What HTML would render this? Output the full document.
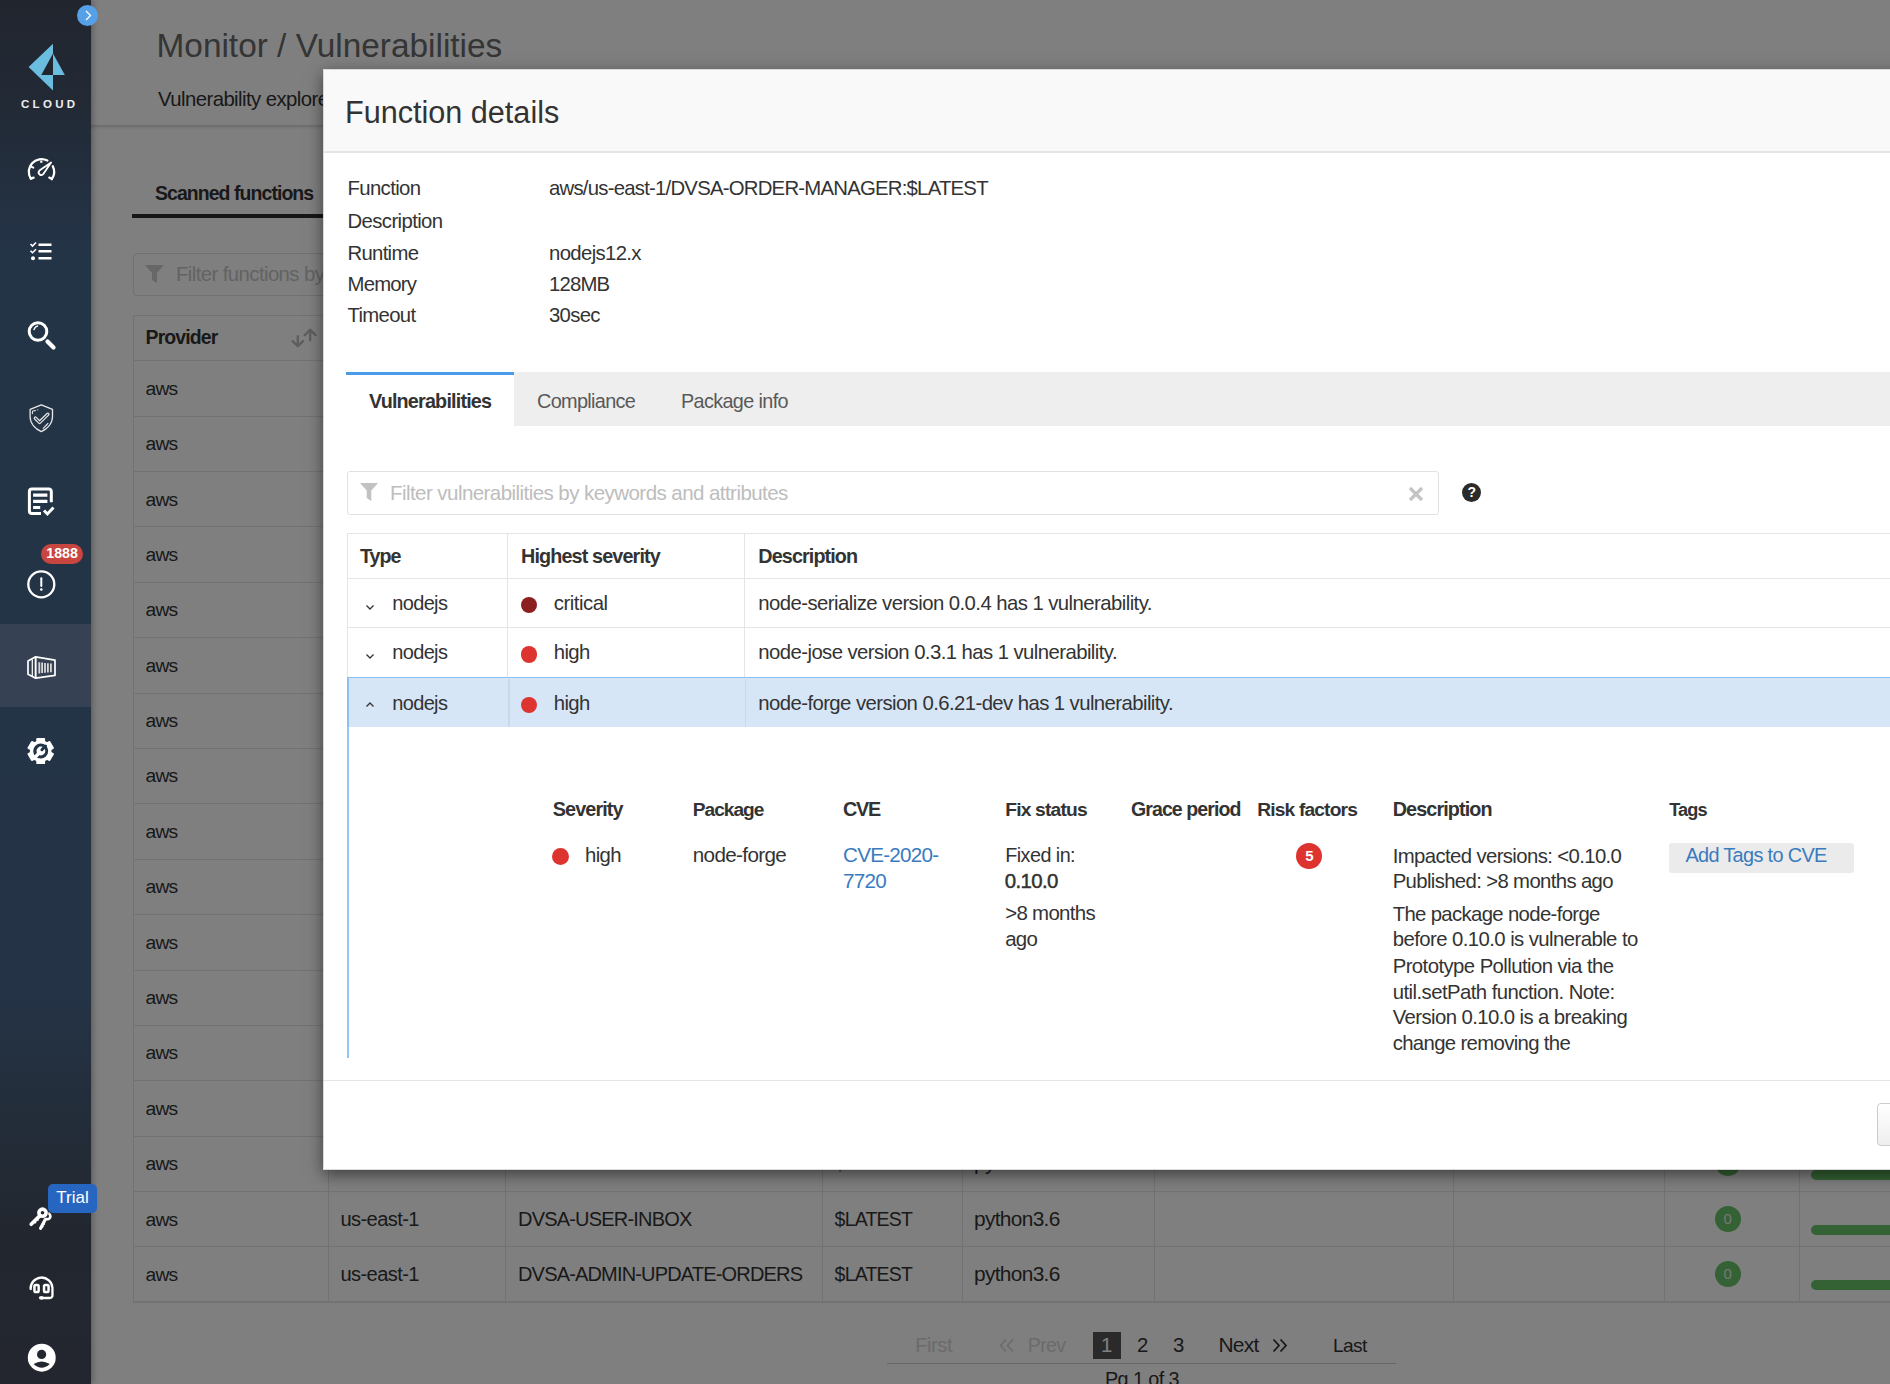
<!DOCTYPE html>
<html><head><meta charset="utf-8">
<style>
*{margin:0;padding:0;box-sizing:border-box}
html,body{width:1890px;height:1384px;overflow:hidden;background:#fff;font-family:"Liberation Sans",sans-serif;color:#333}
.t{position:absolute;white-space:nowrap;line-height:1}
.abs{position:absolute}
#page{position:absolute;left:91px;top:0;width:1799px;height:1384px;background:#fff}
#backdrop{position:absolute;left:0;top:0;width:1890px;height:1384px;background:rgba(0,0,0,.5)}
#side{position:absolute;left:0;top:0;width:91px;height:1384px;box-shadow:1px 0 7px rgba(0,0,0,.35);
 background:linear-gradient(180deg,#21252e 0px,#222a36 110px,#243447 250px,#243447 700px,#243345 1000px,#22272f 1230px,#23262e 1384px)}
#modal{position:absolute;left:323px;top:69px;width:1640px;height:1100.5px;background:#fff;
 box-shadow:0 5px 15px rgba(0,0,0,.5);border:1px solid #d9d9d9;border-right:none;overflow:hidden}
</style></head><body>
<div id="page"></div><div class="t" style="left:156.5px;top:27px;line-height:37px;font-size:33.40px;letter-spacing:0.000px;color:#6a6a6a;">Monitor / Vulnerabilities</div>
<div class="t" style="left:158.0px;top:88px;line-height:22px;font-size:20.33px;letter-spacing:-0.562px;">Vulnerability explorer</div>
<div class="abs" style="left:91px;top:124.5px;width:1799px;height:2px;background:#e0e0e0;box-shadow:0 1px 3px rgba(0,0,0,.12)"></div><div class="t" style="left:155.0px;top:182px;line-height:22px;font-size:19.47px;letter-spacing:-0.931px;font-weight:bold;color:#333;">Scanned functions</div>
<div class="abs" style="left:132px;top:214px;width:260px;height:4px;background:#2c2c2c"></div><div class="abs" style="left:133px;top:253px;width:600px;height:43px;border:1px solid #e0e0e0;border-radius:4px"></div><svg class="abs" style="left:145px;top:265px" width="19" height="18" viewBox="0 0 19 18"><path d="M0 0h19l-7 8v10l-5-3V8z" fill="#cfcfcf"/></svg><div class="t" style="left:176.0px;top:263px;line-height:22px;font-size:20.33px;letter-spacing:-0.578px;color:#c6c6c6;">Filter functions by keywords and attributes</div>
<div class="abs" style="left:133px;top:314.6px;width:1800px;height:987.2px;border:1px solid #e5e5e5"></div><div class="abs" style="left:328px;top:314.6px;width:1px;height:987.2px;background:#e5e5e5"></div><div class="abs" style="left:505px;top:314.6px;width:1px;height:987.2px;background:#e5e5e5"></div><div class="abs" style="left:822px;top:314.6px;width:1px;height:987.2px;background:#e5e5e5"></div><div class="abs" style="left:961.5px;top:314.6px;width:1px;height:987.2px;background:#e5e5e5"></div><div class="abs" style="left:1154px;top:314.6px;width:1px;height:987.2px;background:#e5e5e5"></div><div class="abs" style="left:1452.5px;top:314.6px;width:1px;height:987.2px;background:#e5e5e5"></div><div class="abs" style="left:1664px;top:314.6px;width:1px;height:987.2px;background:#e5e5e5"></div><div class="abs" style="left:1798.5px;top:314.6px;width:1px;height:987.2px;background:#e5e5e5"></div><div class="abs" style="left:133px;top:360.3px;width:1800px;height:1px;background:#e5e5e5"></div><div class="abs" style="left:133px;top:415.7px;width:1800px;height:1px;background:#e5e5e5"></div><div class="abs" style="left:133px;top:471.1px;width:1800px;height:1px;background:#e5e5e5"></div><div class="abs" style="left:133px;top:526.4px;width:1800px;height:1px;background:#e5e5e5"></div><div class="abs" style="left:133px;top:581.8px;width:1800px;height:1px;background:#e5e5e5"></div><div class="abs" style="left:133px;top:637.2px;width:1800px;height:1px;background:#e5e5e5"></div><div class="abs" style="left:133px;top:692.6px;width:1800px;height:1px;background:#e5e5e5"></div><div class="abs" style="left:133px;top:748.0px;width:1800px;height:1px;background:#e5e5e5"></div><div class="abs" style="left:133px;top:803.3px;width:1800px;height:1px;background:#e5e5e5"></div><div class="abs" style="left:133px;top:858.7px;width:1800px;height:1px;background:#e5e5e5"></div><div class="abs" style="left:133px;top:914.1px;width:1800px;height:1px;background:#e5e5e5"></div><div class="abs" style="left:133px;top:969.5px;width:1800px;height:1px;background:#e5e5e5"></div><div class="abs" style="left:133px;top:1024.9px;width:1800px;height:1px;background:#e5e5e5"></div><div class="abs" style="left:133px;top:1080.2px;width:1800px;height:1px;background:#e5e5e5"></div><div class="abs" style="left:133px;top:1135.6px;width:1800px;height:1px;background:#e5e5e5"></div><div class="abs" style="left:133px;top:1191.0px;width:1800px;height:1px;background:#e5e5e5"></div><div class="abs" style="left:133px;top:1246.4px;width:1800px;height:1px;background:#e5e5e5"></div><div class="abs" style="left:133px;top:1301.8px;width:1800px;height:1px;background:#e5e5e5"></div><div class="t" style="left:145.6px;top:326px;line-height:22px;font-size:19.47px;letter-spacing:-0.898px;font-weight:bold;color:#333;">Provider</div>
<svg class="abs" style="left:290px;top:327px" width="28" height="22" viewBox="290 327 28 22"><path d="M297.8 336.2v9.6M292.6 341.2l5.2 5 5.2-5M310.2 340.3V330.2M304.8 335.1l5.4-5.3 5.4 5.3" stroke="#bcbcbc" stroke-width="2.4" fill="none" stroke-linecap="round" stroke-linejoin="round"/></svg><div class="t" style="left:145.5px;top:378px;line-height:21px;font-size:19.26px;letter-spacing:-0.747px;">aws</div>
<div class="t" style="left:145.5px;top:433px;line-height:21px;font-size:19.26px;letter-spacing:-0.747px;">aws</div>
<div class="t" style="left:145.5px;top:489px;line-height:21px;font-size:19.26px;letter-spacing:-0.747px;">aws</div>
<div class="t" style="left:145.5px;top:544px;line-height:21px;font-size:19.26px;letter-spacing:-0.747px;">aws</div>
<div class="t" style="left:145.5px;top:599px;line-height:21px;font-size:19.26px;letter-spacing:-0.747px;">aws</div>
<div class="t" style="left:145.5px;top:655px;line-height:21px;font-size:19.26px;letter-spacing:-0.747px;">aws</div>
<div class="t" style="left:145.5px;top:710px;line-height:21px;font-size:19.26px;letter-spacing:-0.747px;">aws</div>
<div class="t" style="left:145.5px;top:765px;line-height:21px;font-size:19.26px;letter-spacing:-0.747px;">aws</div>
<div class="t" style="left:145.5px;top:821px;line-height:21px;font-size:19.26px;letter-spacing:-0.747px;">aws</div>
<div class="t" style="left:145.5px;top:876px;line-height:21px;font-size:19.26px;letter-spacing:-0.747px;">aws</div>
<div class="t" style="left:145.5px;top:932px;line-height:21px;font-size:19.26px;letter-spacing:-0.747px;">aws</div>
<div class="t" style="left:145.5px;top:987px;line-height:21px;font-size:19.26px;letter-spacing:-0.747px;">aws</div>
<div class="t" style="left:145.5px;top:1042px;line-height:21px;font-size:19.26px;letter-spacing:-0.747px;">aws</div>
<div class="t" style="left:145.5px;top:1098px;line-height:21px;font-size:19.26px;letter-spacing:-0.747px;">aws</div>
<div class="t" style="left:145.5px;top:1153px;line-height:21px;font-size:19.26px;letter-spacing:-0.747px;">aws</div>
<div class="t" style="left:340.5px;top:1152px;line-height:22px;font-size:20.12px;letter-spacing:-0.609px;">us-east-1</div>
<div class="t" style="left:518.0px;top:1152px;line-height:22px;font-size:20.01px;letter-spacing:-0.790px;">DVSA-ADMIN-GET-RECEIPT</div>
<div class="t" style="left:834.6px;top:1152px;line-height:22px;font-size:19.47px;letter-spacing:-0.775px;">$LATEST</div>
<div class="t" style="left:974.0px;top:1151px;line-height:23px;font-size:20.87px;letter-spacing:-0.666px;">python3.6</div>
<div class="abs" style="left:1714.6px;top:1150.4px;width:26px;height:26px;border-radius:50%;background:#68c468;color:#eee;font-size:15px;line-height:26px;text-align:center">0</div><div class="abs" style="left:1810.5px;top:1169.6px;width:120px;height:10px;border-radius:5px;background:#68c468"></div><div class="t" style="left:145.5px;top:1209px;line-height:21px;font-size:19.26px;letter-spacing:-0.747px;">aws</div>
<div class="t" style="left:340.5px;top:1208px;line-height:22px;font-size:20.12px;letter-spacing:-0.609px;">us-east-1</div>
<div class="t" style="left:518.0px;top:1208px;line-height:22px;font-size:20.01px;letter-spacing:-0.810px;">DVSA-USER-INBOX</div>
<div class="t" style="left:834.6px;top:1208px;line-height:22px;font-size:19.47px;letter-spacing:-0.775px;">$LATEST</div>
<div class="t" style="left:974.0px;top:1207px;line-height:23px;font-size:20.87px;letter-spacing:-0.666px;">python3.6</div>
<div class="abs" style="left:1714.6px;top:1205.8px;width:26px;height:26px;border-radius:50%;background:#68c468;color:#eee;font-size:15px;line-height:26px;text-align:center">0</div><div class="abs" style="left:1810.5px;top:1225.0px;width:120px;height:10px;border-radius:5px;background:#68c468"></div><div class="t" style="left:145.5px;top:1264px;line-height:21px;font-size:19.26px;letter-spacing:-0.747px;">aws</div>
<div class="t" style="left:340.5px;top:1263px;line-height:22px;font-size:20.12px;letter-spacing:-0.609px;">us-east-1</div>
<div class="t" style="left:518.0px;top:1263px;line-height:22px;font-size:20.01px;letter-spacing:-0.829px;">DVSA-ADMIN-UPDATE-ORDERS</div>
<div class="t" style="left:834.6px;top:1263px;line-height:22px;font-size:19.47px;letter-spacing:-0.775px;">$LATEST</div>
<div class="t" style="left:974.0px;top:1262px;line-height:23px;font-size:20.87px;letter-spacing:-0.666px;">python3.6</div>
<div class="abs" style="left:1714.6px;top:1261.2px;width:26px;height:26px;border-radius:50%;background:#68c468;color:#eee;font-size:15px;line-height:26px;text-align:center">0</div><div class="abs" style="left:1810.5px;top:1280.4px;width:120px;height:10px;border-radius:5px;background:#68c468"></div><div class="t" style="left:915.2px;top:1334px;line-height:22px;font-size:20.33px;letter-spacing:-0.517px;color:#d6d6d6;">First</div>
<svg class="abs" style="left:999px;top:1338px" width="16" height="15" viewBox="0 0 16 15"><path d="M7 1.5L1.5 7.5 7 13.5M14 1.5L8.5 7.5 14 13.5" stroke="#d6d6d6" stroke-width="1.6" fill="none"/></svg><div class="t" style="left:1027.8px;top:1334px;line-height:22px;font-size:19.58px;letter-spacing:-0.658px;color:#d6d6d6;">Prev</div>
<div class="abs" style="left:1093px;top:1332px;width:28px;height:27px;background:#555"></div><div class="t" style="left:1101.0px;top:1334px;line-height:22px;font-size:20.33px;letter-spacing:-0.740px;color:#fff;">1</div>
<div class="t" style="left:1137.0px;top:1334px;line-height:22px;font-size:20.33px;letter-spacing:-0.740px;">2</div>
<div class="t" style="left:1173.0px;top:1334px;line-height:22px;font-size:20.33px;letter-spacing:-0.740px;">3</div>
<div class="t" style="left:1218.4px;top:1333px;line-height:23px;font-size:20.97px;letter-spacing:-0.705px;">Next</div>
<svg class="abs" style="left:1272px;top:1338px" width="16" height="15" viewBox="0 0 16 15"><path d="M1.5 1.5L7 7.5 1.5 13.5M8.5 1.5L14 7.5 8.5 13.5" stroke="#333" stroke-width="1.8" fill="none"/></svg><div class="t" style="left:1333.0px;top:1335px;line-height:21px;font-size:19.15px;letter-spacing:-0.592px;">Last</div>
<div class="abs" style="left:887px;top:1362.5px;width:509px;height:1.5px;background:#ccc"></div><div class="t" style="left:1105.0px;top:1368px;line-height:22px;font-size:19.80px;letter-spacing:-0.576px;">Pg 1 of 3</div>
<div id="backdrop"></div>
<div id="side"><div class="abs" style="left:0;top:624px;width:91px;height:83px;background:#364253"></div></div><svg class="abs" style="left:0;top:0" width="91" height="120" viewBox="0 0 91 120"><path d="M28.6 67 L53 43.7 L53 90.6 Z" fill="#6bbde0"/><path d="M53 53.5 L64.8 75 L53 75 Z" fill="#6bbde0"/><path d="M53 53.5 L41.3 75 L53 75 Z" fill="#21252e"/></svg><div class="t" style="left:21px;top:98.5px;font-size:11.5px;font-weight:bold;letter-spacing:3.3px;color:#eee">CLOUD</div><div class="abs" style="left:77px;top:5px;width:21px;height:21px;border-radius:50%;background:#56a0e8"></div><svg class="abs" style="left:77px;top:5px" width="21" height="21" viewBox="0 0 21 21"><path d="M9 6l4.5 4.5L9 15" stroke="#fff" stroke-width="1.3" fill="none"/></svg><svg class="abs" style="left:24px;top:154px" width="36" height="30" viewBox="24 154 36 30"><g stroke="#fff" fill="none" stroke-linecap="round" stroke-width="2.3"><path d="M30.84 178.64 A12.65 12.65 0 0 1 47.39 160.58"/><path d="M52.82 166.2 A12.65 12.65 0 0 1 51.81 179"/><path d="M30.84 178.64 L33.6 177.6M51.81 179 L49.3 177.6"/><path d="M41.3 160.6 V162.8" stroke-width="2.2" stroke-linecap="butt"/><path d="M30.6 166.3 L33.3 167.6" stroke-width="2"/><path d="M51.1 162.5 L43.15 174.23 A2.6 2.6 0 0 1 39.45 170.57 Z" stroke-width="1.8" stroke-linejoin="round"/></g></svg><svg class="abs" style="left:29px;top:241px" width="24" height="20" viewBox="0 0 24 20"><path d="M9.5 3.7h13M9.5 10.3h13M9.5 17.2h13" stroke="#fff" stroke-width="2.6"/><path d="M1.5 3l2 2 3.5-3.5M1.5 9.7l2 2 3.5-3.5" stroke="#fff" stroke-width="1.6" fill="none"/><circle cx="4" cy="17.2" r="2" fill="#fff"/></svg><svg class="abs" style="left:24px;top:318px" width="34" height="34" viewBox="0 0 34 34"><circle cx="14" cy="13.5" r="8.8" stroke="#fff" stroke-width="3" fill="none"/><path d="M23.5 23.5l6 6" stroke="#fff" stroke-width="4.2" stroke-linecap="round"/><path d="M10 11.5a5 5 0 0 1 3.5-3.5" stroke="#fff" stroke-width="1.4" fill="none" stroke-linecap="round"/></svg><svg class="abs" style="left:26px;top:401px" width="31" height="34" viewBox="26 401 31 34"><path d="M41.3 404.8 L52.5 409.3 V416.5 C52.5 424 46.5 429.2 41.3 431.6 C36.1 429.2 30.1 424 30.1 416.5 V409.3 Z" stroke="#e8e8e8" stroke-width="1.3" fill="none" stroke-linejoin="round"/><path d="M35.4 418.2 L39.6 422.3 L47.8 414.3" stroke="#e8e8e8" stroke-width="3.5" fill="none" stroke-linecap="round" stroke-linejoin="round"/><path d="M35.4 418.2 L39.6 422.3 L47.8 414.3" stroke="#243447" stroke-width="1.1" fill="none" stroke-linecap="round" stroke-linejoin="round"/><path d="M32.4 413.6 V412 Q32.4 411 34 410.8 L35.4 410.6M43.2 428.3 L47.9 423.5" stroke="#e8e8e8" stroke-width="1.1" fill="none" stroke-linecap="round"/><circle cx="37.8" cy="409.8" r="0.6" fill="#e8e8e8"/></svg><svg class="abs" style="left:24px;top:482px" width="34" height="38" viewBox="24 482 34 38"><path d="M41 513.5 H31.9 A2.5 2.5 0 0 1 29.4 511 V491.4 A2.5 2.5 0 0 1 31.9 488.9 H48.8 A2.5 2.5 0 0 1 51.3 491.4 V502.3" stroke="#fff" stroke-width="3" fill="none"/><path d="M33.1 495.1 H47.4M33.1 501.4 H47.4M33.1 507.5 H40.2" stroke="#fff" stroke-width="3.2"/><path d="M44 510.4 L47.4 514 L53.5 507.4" stroke="#fff" stroke-width="2.9" fill="none"/></svg><svg class="abs" style="left:26px;top:569px" width="31" height="31" viewBox="0 0 31 31"><circle cx="15.3" cy="15.3" r="13" stroke="#fff" stroke-width="2.3" fill="none"/><path d="M15.3 9.2v7.8" stroke="#fff" stroke-width="2" stroke-linecap="round"/><circle cx="15.3" cy="20.5" r="1.3" fill="#fff"/></svg><div class="abs" style="left:41.3px;top:544.3px;width:41.5px;height:20px;border-radius:10px;background:#c9453f;color:#fff;font-size:14.2px;font-weight:bold;line-height:19px;text-align:center">1888</div><svg class="abs" style="left:22px;top:650px" width="38" height="35" viewBox="22 650 38 35"><path d="M35.65 656.8 L55 660.2 V675.4 L35.65 678.2 L28 674.2 V661 Z" stroke="#fff" stroke-width="1.7" fill="none" stroke-linejoin="round"/><path d="M35.65 656.8 V678.2" stroke="#fff" stroke-width="1.9"/><path d="M32.3 659.2 V676.3" stroke="#fff" stroke-width="1.2"/><path d="M39.3 662.3 V673.4M42.1 662.6 V673.1M45 662.9 V672.8M47.9 663.2 V672.5M50.9 663.5 V672.2" stroke="#d8d8d8" stroke-width="1.8"/></svg><svg class="abs" style="left:24px;top:734px" width="34" height="34" viewBox="24 734 34 34"><g transform="translate(40.7 751)" fill="#fff"><circle r="10.8"/><rect x="-4.4" y="-13.1" width="8.8" height="26.2" rx="0.9"/><rect x="-4.4" y="-13.1" width="8.8" height="26.2" rx="0.9" transform="rotate(60)"/><rect x="-4.4" y="-13.1" width="8.8" height="26.2" rx="0.9" transform="rotate(120)"/></g><circle cx="40.7" cy="751" r="7.5" fill="#243447"/><circle cx="40.9" cy="751" r="4.4" fill="#fff"/><path d="M41.9 749.7 L45.5 746" stroke="#243447" stroke-width="3" stroke-linecap="round"/><path d="M40.5 751.5 L35.5 756.8" stroke="#fff" stroke-width="3.4"/></svg><svg class="abs" style="left:26px;top:1204px" width="28" height="30" viewBox="26 1204 28 30"><circle cx="47.4" cy="1216.3" r="3" stroke="#fff" stroke-width="2.6" fill="none"/><path d="M45.3 1219.5 L40.6 1228.3" stroke="#fff" stroke-width="3.2" stroke-linecap="round"/><path d="M43.2 1223.5 l1.6 1M41.8 1226 l1.6 1" stroke="#fff" stroke-width="1.6"/><circle cx="42.5" cy="1212.7" r="3.6" stroke="#23282f" stroke-width="4.8" fill="none"/><circle cx="42.5" cy="1212.7" r="3.6" stroke="#fff" stroke-width="3.6" fill="none"/><path d="M40 1215.6 L31.2 1224.3" stroke="#fff" stroke-width="3.6" stroke-linecap="round"/><path d="M34.5 1221.5 l1.4 1.6M37 1219 l1.4 1.6" stroke="#fff" stroke-width="1.8"/></svg><div class="abs" style="left:48px;top:1184px;width:49px;height:29px;border-radius:5px;background:#2766c0;color:#fff;font-size:17px;line-height:27px;text-align:center">Trial</div><svg class="abs" style="left:26px;top:1272px" width="32" height="32" viewBox="26 1272 32 32"><path d="M30.65 1289 A10.9 10.9 0 0 1 52.45 1287.85 V1295.5 A2.5 2.5 0 0 1 49.95 1298 H42" stroke="#fff" stroke-width="2.3" fill="none" stroke-linecap="round"/><rect x="34.45" y="1284.95" width="4.2" height="7.1" rx="1.3" stroke="#fff" stroke-width="2.5" fill="none"/><rect x="44.05" y="1284.95" width="4.5" height="7.1" rx="1.3" stroke="#fff" stroke-width="2.5" fill="none"/><ellipse cx="41.3" cy="1297.8" rx="2.4" ry="1.9" fill="#fff"/></svg><svg class="abs" style="left:26px;top:1342px" width="32" height="32" viewBox="26 1342 32 32"><circle cx="41.75" cy="1357.7" r="13.95" fill="#fff"/><circle cx="41.6" cy="1354.4" r="4.6" fill="#23272f"/><path d="M33.6 1363.9 Q41.6 1358.9 49.8 1363.9 Q41.6 1371.5 33.6 1363.9 Z" fill="#23272f"/></svg><div id="modal"></div><div class="abs" style="left:324px;top:70px;width:1600px;height:83px;background:#f9f9f9;border-bottom:2px solid #e5e5e5"></div><div class="t" style="left:345.0px;top:95px;line-height:34px;font-size:30.60px;letter-spacing:0.000px;">Function details</div>
<div class="t" style="left:347.5px;top:177px;line-height:22px;font-size:20.33px;letter-spacing:-0.638px;">Function</div>
<div class="t" style="left:549.0px;top:177px;line-height:22px;font-size:20.33px;letter-spacing:-0.768px;">aws/us-east-1/DVSA-ORDER-MANAGER:$LATEST</div>
<div class="t" style="left:347.5px;top:210px;line-height:22px;font-size:20.33px;letter-spacing:-0.605px;">Description</div>
<div class="t" style="left:347.5px;top:242px;line-height:22px;font-size:20.33px;letter-spacing:-0.707px;">Runtime</div>
<div class="t" style="left:549.0px;top:242px;line-height:22px;font-size:20.33px;letter-spacing:-0.643px;">nodejs12.x</div>
<div class="t" style="left:347.5px;top:273px;line-height:22px;font-size:20.33px;letter-spacing:-0.800px;">Memory</div>
<div class="t" style="left:549.0px;top:273px;line-height:22px;font-size:20.33px;letter-spacing:-0.843px;">128MB</div>
<div class="t" style="left:347.5px;top:304px;line-height:22px;font-size:20.33px;letter-spacing:-0.679px;">Timeout</div>
<div class="t" style="left:549.0px;top:304px;line-height:22px;font-size:20.33px;letter-spacing:-0.710px;">30sec</div>
<div class="abs" style="left:346px;top:372px;width:1600px;height:53.5px;background:#eee"></div><div class="abs" style="left:346px;top:372px;width:167.6px;height:53.5px;background:#fff;border-top:3px solid #4a9be8"></div><div class="t" style="left:369.0px;top:390px;line-height:22px;font-size:19.80px;letter-spacing:-0.816px;font-weight:bold;color:#333;">Vulnerabilities</div>
<div class="t" style="left:537.0px;top:390px;line-height:22px;font-size:19.90px;letter-spacing:-0.687px;color:#595959;">Compliance</div>
<div class="t" style="left:681.0px;top:390px;line-height:22px;font-size:19.80px;letter-spacing:-0.624px;color:#595959;">Package info</div>
<div class="abs" style="left:346.5px;top:471px;width:1092px;height:43.5px;border:1px solid #e2e2e2;border-radius:3px"></div><svg class="abs" style="left:360px;top:483px" width="18" height="18" viewBox="0 0 18 18"><path d="M0 0h18l-6.7 7.5V18L6.7 15V7.5z" fill="#c2c2c2"/></svg><div class="t" style="left:390.0px;top:481px;line-height:23px;font-size:20.54px;letter-spacing:-0.569px;color:#bdbdbd;">Filter vulnerabilities by keywords and attributes</div>
<svg class="abs" style="left:1407.5px;top:485.5px" width="16" height="16" viewBox="0 0 16 16"><path d="M2 2l12 12M14 2L2 14" stroke="#c4c4c4" stroke-width="3.2"/></svg><div class="abs" style="left:1462px;top:482.7px;width:19.4px;height:19.4px;border-radius:50%;background:#2b2b2b;color:#fff;font-size:14px;font-weight:bold;line-height:19.4px;text-align:center">?</div><div class="abs" style="left:346.7px;top:532.6px;width:1600px;height:194.2px;border:1px solid #e5e5e5"></div><div class="abs" style="left:346.7px;top:578px;width:1600px;height:1px;background:#e5e5e5"></div><div class="abs" style="left:346.7px;top:627px;width:1600px;height:1px;background:#e5e5e5"></div><div class="abs" style="left:507px;top:532.6px;width:1px;height:194.2px;background:#e5e5e5"></div><div class="abs" style="left:744px;top:532.6px;width:1px;height:194.2px;background:#e5e5e5"></div><div class="abs" style="left:346.7px;top:677.4px;width:1600px;height:49.4px;background:#d6e6f7;border-top:1.5px solid #8cc0f0;border-left:2px solid #8cc0f0"></div><div class="abs" style="left:508.2px;top:678.9px;width:1.5px;height:47.9px;background:#c8d9ea"></div><div class="abs" style="left:744.9px;top:678.9px;width:1.5px;height:47.9px;background:#c8d9ea"></div><div class="t" style="left:360.0px;top:545px;line-height:22px;font-size:19.69px;letter-spacing:-1.011px;font-weight:bold;">Type</div>
<div class="t" style="left:521.0px;top:545px;line-height:22px;font-size:19.80px;letter-spacing:-0.869px;font-weight:bold;">Highest severity</div>
<div class="t" style="left:758.3px;top:545px;line-height:22px;font-size:19.80px;letter-spacing:-0.900px;font-weight:bold;">Description</div>
<svg class="abs" style="left:364.5px;top:603.6px" width="10" height="7" viewBox="0 0 10 7"><path d="M1.5 1.5L5 5l3.5-3.5" stroke="#333" stroke-width="1.3" fill="none"/></svg><div class="t" style="left:392.2px;top:592px;line-height:22px;font-size:20.01px;letter-spacing:-0.643px;">nodejs</div>
<div class="abs" style="left:520.55px;top:596.75px;width:16.7px;height:16.7px;border-radius:50%;background:#8c2020"></div><div class="t" style="left:553.8px;top:592px;line-height:22px;font-size:20.33px;letter-spacing:-0.471px;">critical</div>
<div class="t" style="left:758.3px;top:592px;line-height:22px;font-size:20.33px;letter-spacing:-0.562px;">node-serialize version 0.0.4 has 1 vulnerability.</div>
<svg class="abs" style="left:364.5px;top:652.9px" width="10" height="7" viewBox="0 0 10 7"><path d="M1.5 1.5L5 5l3.5-3.5" stroke="#333" stroke-width="1.3" fill="none"/></svg><div class="t" style="left:392.2px;top:641px;line-height:22px;font-size:20.01px;letter-spacing:-0.643px;">nodejs</div>
<div class="abs" style="left:520.55px;top:646.05px;width:16.7px;height:16.7px;border-radius:50%;background:#dd3430"></div><div class="t" style="left:553.8px;top:641px;line-height:22px;font-size:20.33px;letter-spacing:-0.629px;">high</div>
<div class="t" style="left:758.3px;top:641px;line-height:22px;font-size:20.33px;letter-spacing:-0.571px;">node-jose version 0.3.1 has 1 vulnerability.</div>
<svg class="abs" style="left:364.5px;top:701.4px" width="10" height="7" viewBox="0 0 10 7"><path d="M1.5 5.5L5 2l3.5 3.5" stroke="#333" stroke-width="1.3" fill="none"/></svg><div class="t" style="left:392.2px;top:692px;line-height:22px;font-size:20.01px;letter-spacing:-0.643px;">nodejs</div>
<div class="abs" style="left:520.55px;top:696.55px;width:16.7px;height:16.7px;border-radius:50%;background:#dd3430"></div><div class="t" style="left:553.8px;top:692px;line-height:22px;font-size:20.33px;letter-spacing:-0.629px;">high</div>
<div class="t" style="left:758.3px;top:692px;line-height:22px;font-size:20.33px;letter-spacing:-0.581px;">node-forge version 0.6.21-dev has 1 vulnerability.</div>
<div class="abs" style="left:347px;top:726.8px;width:2px;height:331px;background:#94c6f5"></div><div class="t" style="left:552.7px;top:798px;line-height:22px;font-size:19.80px;letter-spacing:-0.876px;font-weight:bold;">Severity</div>
<div class="t" style="left:692.8px;top:799px;line-height:21px;font-size:19.14px;letter-spacing:-1.009px;font-weight:bold;">Package</div>
<div class="t" style="left:843.0px;top:798px;line-height:22px;font-size:19.80px;letter-spacing:-1.234px;font-weight:bold;">CVE</div>
<div class="t" style="left:1005.2px;top:799px;line-height:21px;font-size:19.25px;letter-spacing:-0.817px;font-weight:bold;">Fix status</div>
<div class="t" style="left:1131.0px;top:798px;line-height:22px;font-size:19.53px;letter-spacing:-0.912px;font-weight:bold;">Grace period</div>
<div class="t" style="left:1257.2px;top:799px;line-height:21px;font-size:19.20px;letter-spacing:-0.832px;font-weight:bold;">Risk factors</div>
<div class="t" style="left:1392.7px;top:798px;line-height:22px;font-size:19.80px;letter-spacing:-0.900px;font-weight:bold;">Description</div>
<div class="t" style="left:1669.3px;top:800px;line-height:20px;font-size:18.15px;letter-spacing:-0.932px;font-weight:bold;">Tags</div>
<div class="abs" style="left:552.2px;top:848.4px;width:17px;height:17px;border-radius:50%;background:#dd3430"></div><div class="t" style="left:585.0px;top:844px;line-height:22px;font-size:20.33px;letter-spacing:-0.629px;">high</div>
<div class="t" style="left:692.8px;top:843px;line-height:23px;font-size:20.65px;letter-spacing:-0.653px;">node-forge</div>
<div class="t" style="left:843.0px;top:843px;line-height:23px;font-size:20.65px;letter-spacing:-0.743px;color:#3a7bbf;">CVE-2020-</div>
<div class="t" style="left:843.0px;top:869px;line-height:23px;font-size:20.65px;letter-spacing:-0.751px;color:#3a7bbf;">7720</div>
<div class="t" style="left:1005.2px;top:844px;line-height:22px;font-size:19.80px;letter-spacing:-0.544px;">Fixed in:</div>
<div class="t" style="left:1004.7px;top:869px;line-height:23px;font-size:20.44px;letter-spacing:-0.619px;-webkit-text-stroke:0.45px #333;">0.10.0</div>
<div class="t" style="left:1005.2px;top:901px;line-height:23px;font-size:20.44px;letter-spacing:-0.698px;">&gt;8 months</div>
<div class="t" style="left:1005.2px;top:927px;line-height:23px;font-size:20.44px;letter-spacing:-0.743px;">ago</div>
<div class="abs" style="left:1296.3px;top:842.7px;width:26px;height:26px;border-radius:50%;background:#dd3430;color:#fff;font-size:15px;font-weight:bold;line-height:26px;text-align:center">5</div><div class="t" style="left:1392.7px;top:845px;line-height:22px;font-size:20.33px;letter-spacing:-0.616px;">Impacted versions: &lt;0.10.0</div>
<div class="t" style="left:1392.7px;top:870px;line-height:22px;font-size:20.33px;letter-spacing:-0.642px;">Published: &gt;8 months ago</div>
<div class="t" style="left:1392.7px;top:903px;line-height:22px;font-size:20.33px;letter-spacing:-0.659px;">The package node-forge</div>
<div class="t" style="left:1392.7px;top:928px;line-height:22px;font-size:20.33px;letter-spacing:-0.572px;">before 0.10.0 is vulnerable to</div>
<div class="t" style="left:1392.7px;top:955px;line-height:22px;font-size:20.33px;letter-spacing:-0.572px;">Prototype Pollution via the</div>
<div class="t" style="left:1392.7px;top:981px;line-height:22px;font-size:20.33px;letter-spacing:-0.554px;">util.setPath function. Note:</div>
<div class="t" style="left:1392.7px;top:1006px;line-height:22px;font-size:20.33px;letter-spacing:-0.586px;">Version 0.10.0 is a breaking</div>
<div class="t" style="left:1392.7px;top:1032px;line-height:22px;font-size:20.33px;letter-spacing:-0.654px;">change removing the</div>
<div class="abs" style="left:1668.7px;top:843.2px;width:185.4px;height:30px;background:#ebebeb;border-radius:3px"></div><div class="t" style="left:1685.4px;top:844px;line-height:22px;font-size:19.90px;letter-spacing:-0.659px;color:#3a7bbf;">Add Tags to CVE</div>
<div class="abs" style="left:324px;top:1058px;width:1600px;height:22px;background:#fff"></div><div class="abs" style="left:324px;top:1079.5px;width:1600px;height:1.5px;background:#e5e5e5"></div><div class="abs" style="left:1876.5px;top:1103.4px;width:100px;height:43px;border:1px solid #ccc;border-radius:4px;background:linear-gradient(#fff,#eee)"></div></body></html>
